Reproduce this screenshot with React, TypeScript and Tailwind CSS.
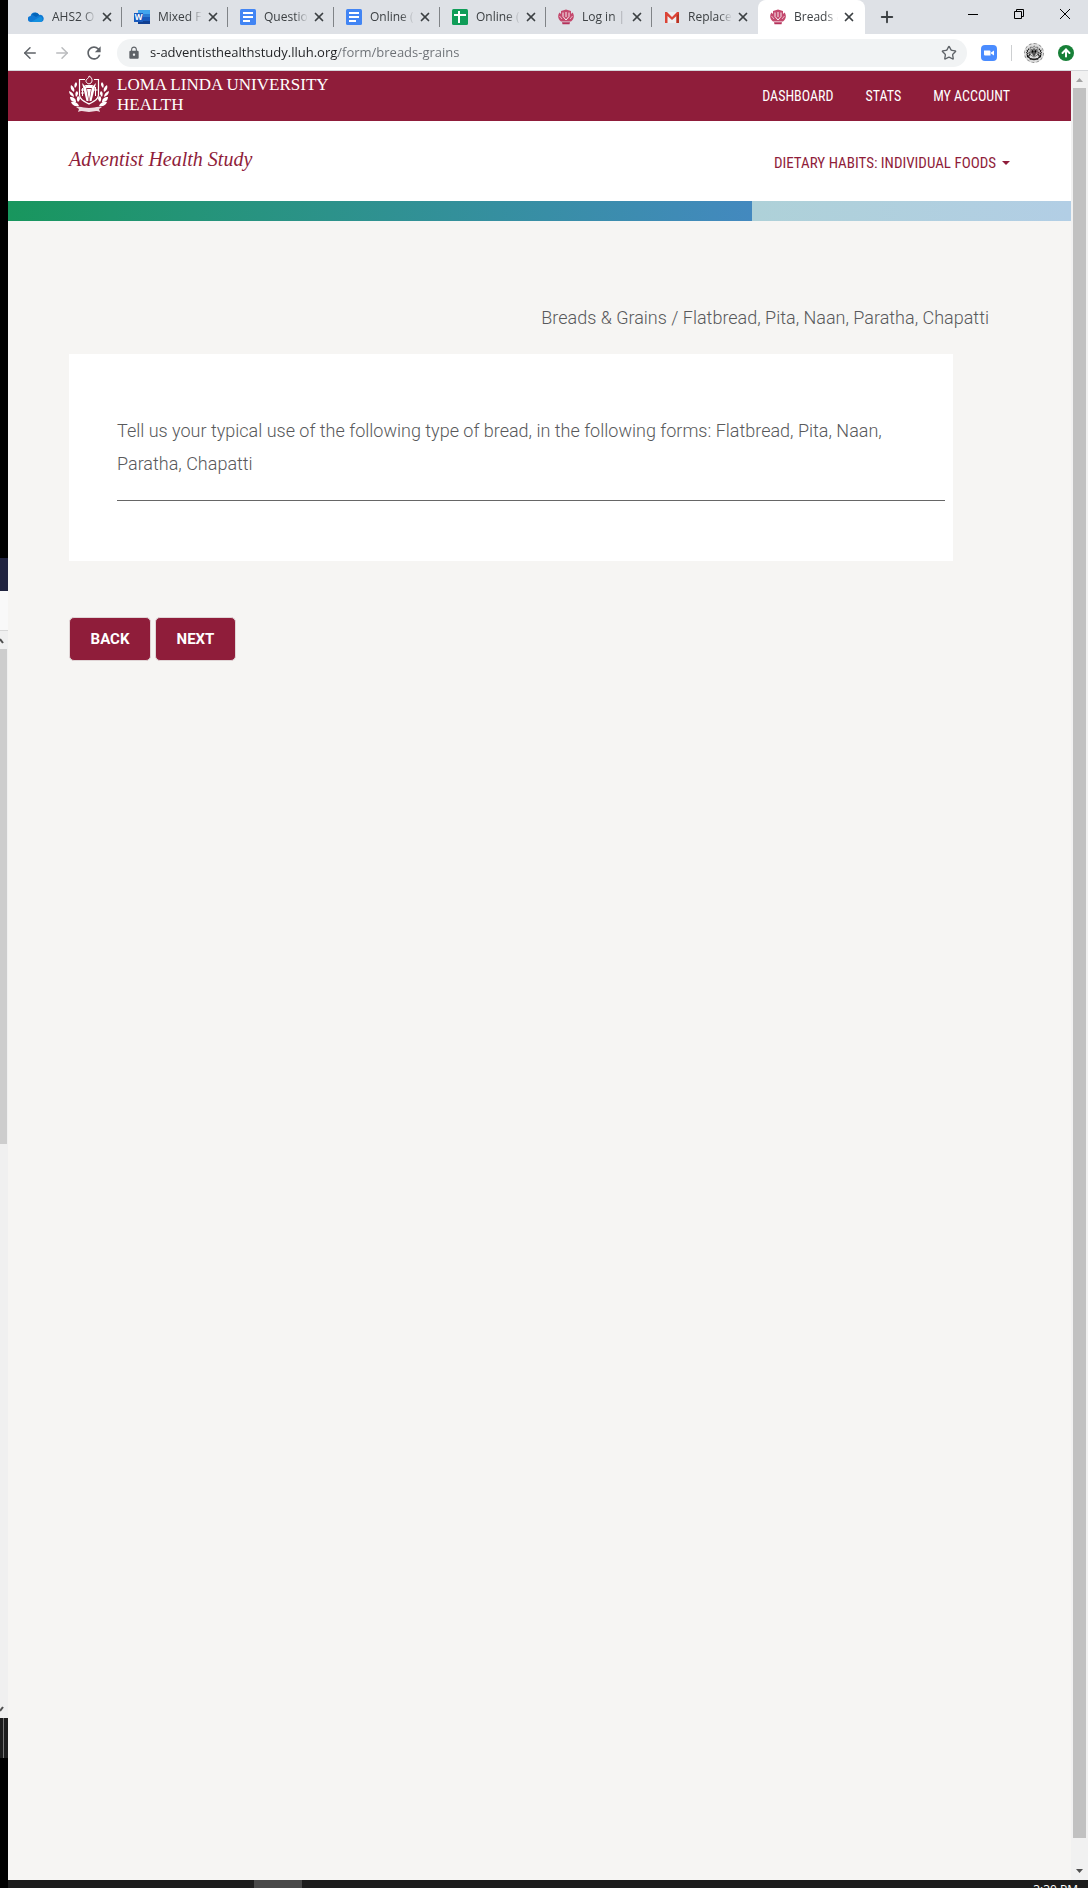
import { FC, ReactNode } from 'react';
import { ArrowLeft, ArrowRight, ArrowUp, Plus, Star, X } from 'lucide-react';
import { MdLock, MdRefresh } from 'react-icons/md';

const CREST_LEAVES = [
  'M10 31c-4 1-7-1-8-4 4-1 7 1 8 4z',
  'M7 27c-4 0-6-2-6-5 4 0 6 2 6 5z',
  'M5 22c-3-1-5-3-5-6 3 1 5 3 5 6z',
  'M5 17c-3-2-4-4-3-7 3 2 4 4 3 7z',
  'M6 13c-1-2-1-4 1-6 2 2 1 4-1 6z',
  'M9 27c-2-3-1-5 0-6 3 2 2 4 0 6z',
  'M7 22c-1-3-1-5 1-6 2 2 1 4-1 6z',
];

const Crest: FC<{ className?: string }> = ({ className }) => (
  <svg viewBox="0 0 40 38" className={className} fill="currentColor" aria-hidden="true">
    <g>
      {CREST_LEAVES.map((d) => (
        <path key={d} d={d} />
      ))}
    </g>
    <g transform="matrix(-1 0 0 1 40 0)">
      {CREST_LEAVES.map((d) => (
        <path key={d} d={d} />
      ))}
    </g>
    <path
      d="M16 4.500h-5.500V20c0 4 4 6 9.500 9 5.500-3 9.500-5 9.500-9V4.500H25"
      fill="none"
      stroke="currentColor"
      strokeWidth="1.2"
    />
    <path d="M20 9c-3-1-4-3-2-5 1-1 2-1 2-3 3 1 4 5 2 7z" fill="none" stroke="currentColor" strokeWidth="1" />
    <path d="M16 10h8l-1 3h-6z" />
    <path d="M13 8l4 4 2.500 14h-2zM27 8l-4 4-2.500 14h2z" />
    <path d="M18 14h4l-2 12z" />
    <path d="M13.500 13v8M12 15h3M12 18h3M26.500 12v9M24.500 15h4" fill="none" stroke="currentColor" strokeWidth="1" />
    <path d="M7 32c5-1 8 1 13 1s8-2 13-1l-3 2 1 3c-4-2-7 0-11 0s-7-2-11 0l1-3z" fillOpacity=".85" />
  </svg>
);

const CrestFavicon = () => (
  <svg viewBox="0 0 16 16" className="size-4" aria-hidden="true">
    <path d="M1.500 3.500C-.5 6-.5 9.500 3 12.500h10c3.500-3 3.500-6.500 1.500-9L13 5V2L8 .5 3 2v3z" fill="#c4486d" />
    <path d="M5 3.500v4L8 11l3-3.500v-4M8 3v5" fill="none" stroke="#fff" strokeWidth=".9" />
    <path d="M1.500 7l2.500 3M14.500 7L12 10" stroke="#f3d5de" strokeWidth=".8" />
    <path d="M4 13.200h8l-.5 2h-7z" fill="#b5305a" />
  </svg>
);

const OneDriveIcon = () => (
  <svg viewBox="0 0 16 16" className="size-4" aria-hidden="true">
    <path d="M3 13a3 3 0 0 1-.4-6A4.500 4.500 0 0 1 11 6a3.600 3.600 0 0 1 2 7z" fill="#0f78d4" />
    <path d="M4 5.500A4.500 4.500 0 0 1 11.400 6L8 8z" fill="#0364b8" />
    <path d="M3 13l9.500-5.500A3 3 0 0 1 13 13z" fill="#1490df" />
  </svg>
);

const WordIcon = () => (
  <span className="relative flex size-4 items-center">
    <svg viewBox="0 0 16 16" className="absolute inset-0 size-4" aria-hidden="true">
      <path d="M4 1h12v4H4z" fill="#41a5ee" />
      <path d="M4 5h12v3H4z" fill="#2b7cd3" />
      <path d="M4 8h12v4H4z" fill="#185abd" />
      <path d="M4 12h12v3H4z" fill="#103f91" />
      <path d="M0 4h9v9H0z" fill="#185abd" />
    </svg>
    <span className="relative w-[9px] text-center text-[8px] leading-none font-bold text-white">W</span>
  </span>
);

const DocsIcon = () => (
  <svg viewBox="0 0 16 16" className="size-4" aria-hidden="true">
    <rect width="16" height="16" rx="1.500" fill="#4285f4" />
    <path d="M3 4h10M3 8h10M3 12h7" stroke="#fff" strokeWidth="2" />
  </svg>
);

const SheetsIcon = () => (
  <svg viewBox="0 0 16 16" className="size-4" aria-hidden="true">
    <rect width="16" height="16" rx="1.500" fill="#0f9d58" />
    <path d="M2 6h12M7 2v12" stroke="#fff" strokeWidth="2" />
  </svg>
);

const GmailIcon = () => (
  <svg viewBox="0 0 16 16" className="size-4" aria-hidden="true">
    <path d="M2 3h12v11H2z" fill="#eceff1" />
    <path d="M1 14V3h2l5 5 5-5h2v11h-2.500V7L8 11 3.500 7v7z" fill="#db4437" />
    <path d="M12.500 7L15 4v10h-2.500z" fill="#b93221" />
  </svg>
);

const TABS: { title: string; icon: ReactNode }[] = [
  { title: 'AHS2 O', icon: <OneDriveIcon /> },
  { title: 'Mixed F', icon: <WordIcon /> },
  { title: 'Questio', icon: <DocsIcon /> },
  { title: 'Online (', icon: <DocsIcon /> },
  { title: 'Online (', icon: <SheetsIcon /> },
  { title: 'Log in |', icon: <CrestFavicon /> },
  { title: 'Replace', icon: <GmailIcon /> },
  { title: 'Breads &', icon: <CrestFavicon /> },
];

const NAV_LINKS = ['DASHBOARD', 'STATS', 'MY ACCOUNT'];

const TabStrip = () => (
  <div className="flex h-[34px] bg-[#dee1e6] pl-2 text-[#3c4043]">
    <div className="flex">
      {TABS.map(({ title, icon }, i) => {
        const active = i === TABS.length - 1;
        return (
          <div
            key={i}
            className={
              active ? 'flex w-[107px] items-center rounded-t-lg bg-white pl-3' : 'flex w-[106px] items-center pl-3'
            }
          >
            <button type="button" className="flex items-center gap-2">
              {icon}
              <span className="w-11 text-left text-xs whitespace-nowrap [mask-image:linear-gradient(to_right,black_70%,transparent)]">
                {title}
              </span>
            </button>
            <button type="button" aria-label={`Close ${title}`} className="ml-1">
              <X className="size-3.5" strokeWidth={3} />
            </button>
            {!active && i !== TABS.length - 2 && <span className="ml-auto h-5 w-px bg-[#808387]" />}
          </div>
        );
      })}
    </div>
    <button type="button" aria-label="New tab" className="ml-[13px]">
      <Plus className="size-[18px]" strokeWidth={2.5} />
    </button>
    <div className="ml-auto flex gap-9 pr-[18px] pb-1.5 text-black">
      <button type="button" aria-label="Minimize">
        <svg viewBox="0 0 10 10" className="size-2.5" stroke="currentColor" aria-hidden="true">
          <path d="M0 5.500h10" />
        </svg>
      </button>
      <button type="button" aria-label="Restore">
        <svg viewBox="0 0 10 10" className="size-2.5" fill="none" stroke="currentColor" aria-hidden="true">
          <path d="M.5 2.500h7v7h-7zM2.500 2.500v-2h7v7h-2" />
        </svg>
      </button>
      <button type="button" aria-label="Close window">
        <svg viewBox="0 0 10 10" className="size-2.5" stroke="currentColor" aria-hidden="true">
          <path d="M0 0l10 10M10 0L0 10" />
        </svg>
      </button>
    </div>
  </div>
);

const Toolbar = () => (
  <div className="flex h-[37px] items-center border-b border-[#d5d7da] bg-white pt-px pr-3.5 pl-[13px] text-[#5f6368]">
    <button type="button" aria-label="Back">
      <ArrowLeft className="size-[18px]" />
    </button>
    <button type="button" aria-label="Forward" className="ml-3.5 text-[#babcbe]">
      <ArrowRight className="size-[18px]" />
    </button>
    <button type="button" aria-label="Reload" className="ml-[13px]">
      <MdRefresh className="size-5" />
    </button>
    <div className="ml-[13px] flex h-7 flex-1 items-center rounded-full bg-[#f1f3f4] pr-2.5 pl-2.5">
      <MdLock className="size-3.5" />
      <input
        type="text"
        aria-label="Address"
        defaultValue="s-adventisthealthstudy.lluh.org/form/breads-grains"
        className="ml-[9px] min-w-0 flex-1 bg-[linear-gradient(to_right,#202124_188px,#6b6f74_188px)] bg-clip-text text-[13px] text-transparent outline-none"
      />
      <button type="button" aria-label="Bookmark">
        <Star className="size-4" />
      </button>
    </div>
    <button type="button" aria-label="Zoom" className="ml-3.5">
      <svg viewBox="0 0 16 16" className="size-4" aria-hidden="true">
        <rect width="16" height="16" rx="4" fill="#4a8cff" />
        <path d="M3 5.500h5.500a1 1 0 0 1 1 1v4H4a1 1 0 0 1-1-1zM10 7.500l3-2v5l-3-2z" fill="#fff" />
      </svg>
    </button>
    <span className="ml-3.5 h-4 w-px bg-[#cdcfd1]" />
    <button type="button" aria-label="Profile" className="ml-3">
      <span className="flex size-5 items-center justify-center rounded-full border border-dashed border-[#888] bg-[#ddd]">
        <Crest className="size-4 text-black" />
      </span>
    </button>
    <button
      type="button"
      aria-label="Update"
      className="ml-3.5 flex size-4 items-center justify-center rounded-full bg-[#188038] text-white"
    >
      <ArrowUp className="size-3" strokeWidth={4} />
    </button>
  </div>
);

const ScrollBar = () => (
  <div className="flex w-[17px] flex-col items-center bg-[#f1f1f1]">
    <svg viewBox="0 0 17 17" className="size-[17px]" aria-hidden="true">
      <path d="M5 11h7L8.500 7z" fill="#a3a3a3" />
    </svg>
    <div className="w-[13px] flex-1 bg-[#c1c1c1]" />
    <svg viewBox="0 0 17 42" className="h-[42px] w-[17px]" aria-hidden="true">
      <path d="M5 31h7l-3.500 4z" fill="#505050" />
    </svg>
  </div>
);

// Edge of the window lying behind the browser
const BackWindow = () => (
  <div className="flex w-2 shrink-0 flex-col overflow-hidden bg-black">
    <div className="h-[558px]" />
    <div className="h-[33px] bg-[#20233f]" />
    <div className="h-10 border-b border-[#d8d8d8] bg-[#f9f9f9]" />
    <div className="flex flex-1 flex-col bg-[#f0f0f0]">
      <svg viewBox="0 0 8 18" className="h-[18px] w-2" aria-hidden="true">
        <path d="M0 8l3 4" stroke="#505050" strokeWidth="2" />
      </svg>
      <div className="h-[495px] w-[7px] bg-[#cdcdcd]" />
      <svg viewBox="0 0 8 18" className="mt-auto h-[18px] w-2" aria-hidden="true">
        <path d="M0 11l3-4" stroke="#505050" strokeWidth="2" />
      </svg>
    </div>
    <div className="flex h-10 justify-end bg-[#1d1d1d] pr-1">
      <span className="w-px bg-[#777]" />
    </div>
    <div className="h-[130px]" />
  </div>
);

const SiteHeader = () => (
  <header>
    <div className="flex h-[50px] items-start justify-between bg-[#8f1d3a] px-[61px] text-white">
      <a href="#home" className="flex gap-2 pt-1">
        <Crest className="h-[38px] w-10" />
        <span className="font-['Liberation_Serif',serif] text-[17px] leading-5">
          LOMA LINDA UNIVERSITY
          <br />
          HEALTH
        </span>
      </a>
      <nav className="flex gap-8 pt-[15px] font-['Roboto_Condensed',Roboto,sans-serif] text-sm">
        {NAV_LINKS.map((link) => (
          <a key={link} href="#nav">
            {link}
          </a>
        ))}
      </nav>
    </div>
    <div className="flex h-20 items-center justify-between bg-white px-[61px] text-[#8f1d3a]">
      <a href="#study" className="pb-1 font-['Liberation_Serif',serif] text-xl italic">
        Adventist Health Study
      </a>
      <button
        type="button"
        className="flex items-center gap-1.5 pt-1 font-['Roboto_Condensed',Roboto,sans-serif] text-[15px]"
      >
        DIETARY HABITS: INDIVIDUAL FOODS
        <svg viewBox="0 0 8 4" className="h-1 w-2" fill="currentColor" aria-hidden="true">
          <path d="M0 0h8L4 4z" />
        </svg>
      </button>
    </div>
    <div className="flex h-5 bg-linear-to-r from-[#aed1d8] from-70% to-[#b2cee5]">
      <div className="w-[70%] bg-linear-to-r from-[#18965d] to-[#4389bf]" />
    </div>
  </header>
);

const FormPage = () => (
  <main className="flex-1 px-[61px] pt-20 font-[Roboto,sans-serif] text-lg font-light text-[#58595b]">
    <p className="pr-[21px] text-right leading-[33px]">
      Breads &amp; Grains / Flatbread, Pita, Naan, Paratha, Chapatti
    </p>
    <section className="mt-5 mr-[57px] bg-white pt-[60px] pr-2 pb-[60px] pl-12">
      <p className="pr-9 leading-[33px]">
        Tell us your typical use of the following type of bread, in the following forms: Flatbread, Pita, Naan, Paratha,
        Chapatti
      </p>
      <hr className="mt-5 border-[#666]" />
    </section>
    <div className="mt-14 flex gap-1 text-[15px] font-bold text-white">
      <button type="button" className="h-11 w-[82px] rounded-[5px] border border-[#e0d5d6] bg-[#8f1d3a] pt-0.5">
        BACK
      </button>
      <button type="button" className="h-11 w-[81px] rounded-[5px] border border-[#e0d5d6] bg-[#8f1d3a] pt-0.5">
        NEXT
      </button>
    </div>
  </main>
);

export default function App() {
  return (
    <div className="flex min-h-screen font-['Open_Sans','Noto_Sans',sans-serif]">
      <BackWindow />
      <div className="flex min-w-0 flex-1 flex-col">
        <TabStrip />
        <Toolbar />
        <div className="flex flex-1">
          <div className="flex min-w-0 flex-1 flex-col bg-[#f6f5f3]">
            <SiteHeader />
            <FormPage />
          </div>
          <ScrollBar />
        </div>
        <div className="flex h-2 justify-between overflow-hidden bg-[#1c1c1c] pr-2.5 pl-[246px]">
          <span className="w-12 bg-[#484848]" />
          <time className="text-xs leading-5 text-white">3:30 PM</time>
        </div>
      </div>
    </div>
  );
}
